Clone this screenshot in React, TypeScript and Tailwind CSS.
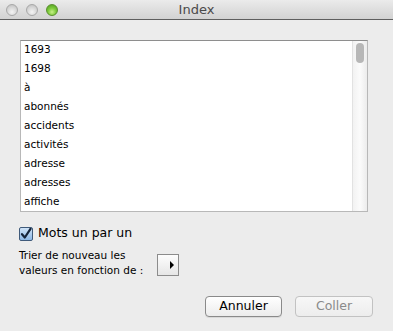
import React from 'react';

const words = ['1693', '1698', 'à', 'abonnés', 'accidents', 'activités', 'adresse', 'adresses', 'affiche'];

const font = { fontFamily: '"DejaVu Sans", "Lucida Grande", sans-serif' };

function TrafficLight({ color }: { color: 'gray' | 'green' }) {
  const cls =
    color === 'green'
      ? 'bg-[radial-gradient(circle_at_50%_70%,#c8f08a_0%,#7ecb3c_45%,#4b9a1c_100%)] border-[#5a8f2e]'
      : 'bg-[radial-gradient(circle_at_50%_70%,#f4f4f4_0%,#d6d6d6_55%,#b9b9b9_100%)] border-[#a8a8a8]';
  return <span className={`h-[12px] w-[12px] rounded-full border ${cls}`} />;
}

export default function App() {
  return (
    <div className="flex h-[331px] w-[393px] flex-col overflow-hidden bg-[#ececec]" style={font}>
      {/* title bar */}
      <div className="relative flex h-[20px] shrink-0 items-center border-b border-[#5e5e5e] bg-gradient-to-b from-[#ebebeb] to-[#d2d2d2] pl-[6px]">
        <div className="flex items-center gap-[8px]">
          <TrafficLight color="gray" />
          <TrafficLight color="gray" />
          <TrafficLight color="green" />
        </div>
        <div className="absolute inset-0 flex items-center justify-center text-[13px] text-[#4a4a4a]">Index</div>
      </div>

      <div className="flex flex-col px-[20px] pt-[20px]">
        {/* list */}
        <div className="flex h-[172px] w-[348px] border border-[#b8b8b8] border-t-[#8e8e8e] bg-white">
          <div className="flex-1 -mt-[1px] pl-[3px] text-[10.5px] leading-[19px] text-black">
            {words.map((w) => (
              <div key={w}>{w}</div>
            ))}
          </div>
          <div className="flex w-[15px] justify-center border-l border-[#e2e2e2] bg-gradient-to-r from-[#f2f2f2] via-[#fbfbfb] to-[#ececec] pt-[2px]">
            <div className="h-[20px] w-[8px] rounded-full bg-[#b7b7b7]" />
          </div>
        </div>

        {/* checkbox */}
        <div className="-ml-[1px] mt-[14px] flex h-[15px] items-center gap-[5px]">
          <span className="flex h-[14px] w-[14px] items-center justify-center rounded-[2px] border border-[#3f5a7a] bg-gradient-to-b from-[#cfe3f7] to-[#8db8e6]">
            <svg width="12" height="12" viewBox="0 0 12 12">
              <path d="M2 6.2 L4.8 9.5 L10.5 0.8" fill="none" stroke="#15243a" strokeWidth="2.2" strokeLinecap="round" strokeLinejoin="round" />
            </svg>
          </span>
          <span className="text-[12.5px] text-black">Mots un par un</span>
        </div>

        {/* sort */}
        <div className="-ml-[1px] mt-[7px] flex items-start">
          <div className="w-[138px] text-[10.5px] leading-[15px] text-black">
            Trier de nouveau les
            <br />
            valeurs en fonction de :
          </div>
          <button className="mt-[6px] flex h-[22px] w-[22px] items-center justify-end border border-[#8c8c8c] bg-gradient-to-b from-[#fdfdfd] to-[#e6e6e6] pr-[3px]">
            <svg width="6" height="8" viewBox="0 0 6 8">
              <path d="M1 0 L5 4 L1 8 Z" fill="#000" />
            </svg>
          </button>
        </div>

        {/* buttons */}
        <div className="mt-[18px] flex justify-end gap-[13px]">
          <button className="flex h-[21px] w-[77px] items-center justify-center rounded-[4px] border border-[#8a8a8a] bg-gradient-to-b from-white to-[#ececec] text-[12.5px] text-black shadow-[0_1px_0_rgba(0,0,0,0.08)]">
            Annuler
          </button>
          <button className="flex h-[21px] w-[78px] items-center justify-center rounded-[4px] border border-[#c2c2c2] bg-gradient-to-b from-[#f7f7f7] to-[#ededed] text-[12.5px] text-[#8a8a8a]">
            Coller
          </button>
        </div>
      </div>
    </div>
  );
}
